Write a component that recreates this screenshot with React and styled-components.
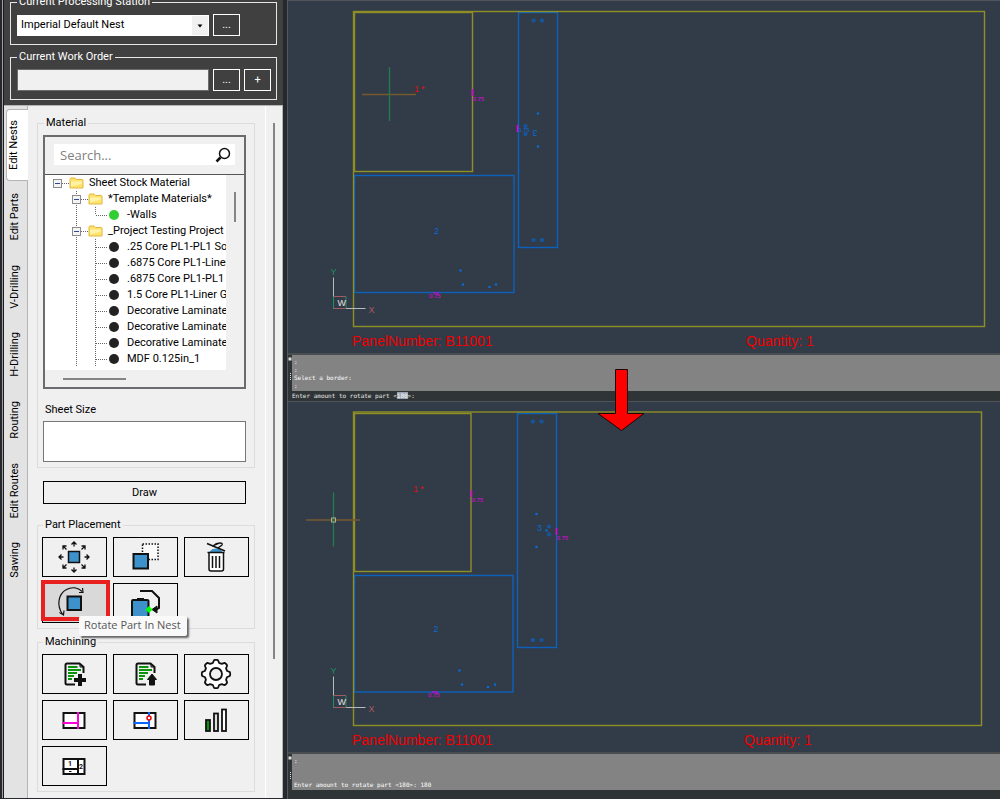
import React, { useState } from 'react';
import styled, { createGlobalStyle } from 'styled-components';

const GlobalStyle = createGlobalStyle`
  * {
    box-sizing: border-box;
  }
  body {
    margin: 0;
    background-color: #2f3437;
    color: #000;
    font-family: Roboto, 'Liberation Sans', Arial, sans-serif;
    font-size: 11px;
    line-height: 14px;
  }
  button, input, select, textarea {
    font: inherit;
    color: inherit;
    border-radius: 0;
  }
  svg {
    display: block;
  }
`;

const Wrapper = styled.div`
  display: flex;
  min-height: 100vh;
`;

/* ---------- palette ---------- */

const Palette = styled.aside`
  display: flex;
  flex: none;
  width: 287px;
  padding: 0 4px 2px 2px;
  background-color: #25292d;
`;

const PaletteInner = styled.div`
  display: flex;
  flex-direction: column;
  flex: 1;
  min-width: 0;
  padding-left: 1px;
  border-left: 1px solid #a0a0a0;
  background-color: #1a1a1a;
  overflow: hidden;
`;

const Header = styled.header`
  display: flex;
  flex-direction: column;
  gap: 5px;
  margin-top: -5px;
  padding: 0 6px 5px;
  background-color: #404040;
`;

const Group = styled.fieldset`
  min-width: 0;
  margin: 0;
  padding: ${(props) => props.$padding};
  border: 1px solid ${(props) => (props.$dark ? '#e6e6e6' : '#dcdcdc')};
  color: ${(props) => (props.$dark ? '#fff' : '#000')};
  legend {
    height: 14px;
    margin-left: ${(props) => (props.$dark ? '0' : '1px')};
    padding: 0 2px;
  }
`;

const StationRow = styled.div`
  display: grid;
  grid-template-columns: 1fr 27px 27px;
  gap: 4px;
  align-items: center;
`;

const SelectBox = styled.div`
  position: relative;
  height: 21px;
  select {
    width: 100%;
    height: 21px;
    padding: 0 20px 0 4px;
    border: none;
    appearance: none;
    background-color: #fff;
    color: #000;
  }
  svg {
    position: absolute;
    top: 1px;
    right: 1px;
    pointer-events: none;
  }
`;

const OrderInput = styled.input`
  width: 100%;
  height: 22px;
  border: 1px solid #6b6b6b;
  background-color: #f0f0f0;
  color: #000;
`;

const DarkButton = styled.button`
  height: 22px;
  padding: 0;
  border: 1px solid #fff;
  background-color: #404040;
  color: #fff;
`;

const Body = styled.div`
  display: flex;
  flex: 1;
  border-top: 1px solid #b4b4b4;
  border-right: 1px solid #b4b4b4;
  background-color: #f0f0f0;
`;

const Tabs = styled.nav`
  display: flex;
  flex-direction: column;
  align-items: flex-end;
  width: 24px;
  padding-top: 3px;
  border-right: 1px solid #b4b4b4;
  background-color: #e3e3e3;
`;

const Tab = styled.button`
  width: ${(props) => (props.$active ? '22px' : '23px')};
  margin-right: ${(props) => (props.$active ? '-1px' : '0')};
  padding: ${(props) => (props.$active ? '10px 7px 10px 0' : '12px 5px 12px 4px')};
  border: 1px solid ${(props) => (props.$active ? '#b4b4b4' : 'transparent')};
  border-width: ${(props) => (props.$active ? '1px 0 1px 1px' : '0')};
  border-radius: 4px 0 0 4px;
  background-color: ${(props) => (props.$active ? '#fff' : 'transparent')};
  span {
    display: block;
    writing-mode: vertical-rl;
    transform: rotate(180deg);
    white-space: nowrap;
  }
`;

const Tools = styled.main`
  flex: 1;
  min-width: 0;
  padding: 10px 10px 6px 9px;
`;

const Gutter = styled.div`
  display: flex;
  justify-content: center;
  width: 17px;
  padding: 17px 1px 0 0;
  border-left: 1px solid #fff;
`;

const Thumb = styled.div`
  width: ${(props) => (props.$horizontal ? '63px' : '2px')};
  height: ${(props) => (props.$horizontal ? '2px' : props.$length)};
  background-color: #858585;
`;

const TreeBox = styled.div`
  border: 2px solid #6a6c70;
  background-color: #f0f0f0;
`;

const SearchArea = styled.div`
  padding: 7px 9px 9px;
  border-bottom: 1px solid #555;
`;

const SearchBar = styled.label`
  display: flex;
  align-items: center;
  height: 21px;
  padding: 0 4px 0 6px;
  background-color: #fff;
  input {
    flex: 1;
    min-width: 0;
    padding: 0;
    border: none;
    outline: none;
    font: 13px/18px 'Open Sans', sans-serif;
    &::placeholder {
      color: #808080;
      opacity: 1;
    }
  }
`;

const TreeScroll = styled.div`
  display: grid;
  grid-template-columns: 1fr 18px;
`;

const Tree = styled.ul`
  height: 195px;
  margin: 0;
  padding: 0;
  list-style: none;
  background-color: #fff;
  overflow: hidden;
`;

const TreeRow = styled.li`
  display: flex;
  align-items: center;
  height: 16px;
  svg {
    flex: none;
  }
  span {
    margin-left: 5px;
    white-space: nowrap;
  }
`;

const VerticalTrack = styled.div`
  display: flex;
  justify-content: center;
  padding-top: 17px;
`;

const HorizontalTrack = styled.div`
  height: 17px;
  padding: 8px 0 0 18px;
`;

const FieldLabel = styled.label`
  display: block;
  margin: 14px 0 4px 2px;
`;

const SheetSize = styled.textarea`
  display: block;
  width: 100%;
  height: 41px;
  border: 1px solid #777;
  background-color: #fff;
  resize: none;
`;

const DrawButton = styled.button`
  display: block;
  width: calc(100% - 15px);
  height: 23px;
  margin: 13px 0 14px 6px;
  padding: 0;
  border: 1px solid #000;
  background-color: #f0f0f0;
`;

const ButtonGrid = styled.div`
  display: grid;
  grid-template-columns: repeat(3, 1fr);
  gap: 6px;
`;

const ToolSlot = styled.div`
  position: relative;
`;

const ToolButton = styled.button`
  display: flex;
  justify-content: center;
  align-items: center;
  width: 100%;
  height: 40px;
  padding: 0;
  border: 1px solid #000;
  background-color: ${(props) => (props.$hovered ? '#d9d9d9' : '#f0f0f0')};
`;

const Highlight = styled.div`
  position: absolute;
  inset: -3px -3px 2px -1px;
  border: 4px solid #e8201e;
  pointer-events: none;
`;

const Tooltip = styled.div`
  position: absolute;
  top: 33px;
  left: 37px;
  z-index: 2;
  padding: 1px 6px 3px 5px;
  border-radius: 2px;
  background-color: #f9f9f9;
  box-shadow: 2px 2px 2px #666;
  color: #575757;
  font: 11px/16px 'Open Sans', sans-serif;
  white-space: nowrap;
`;

const Spacer = styled.div`
  height: 6px;
`;

/* ---------- drawing area ---------- */

const Workspace = styled.section`
  position: relative;
  flex: 1;
  min-width: 0;
  border-left: 1px solid #55585c;
`;

const Viewport = styled.div`
  border-top: 1px solid #50545a;
  border-bottom: 2px solid #4a4d50;
  background-color: #323b48;
  svg {
    width: 100%;
    height: auto;
  }
`;

const Console = styled.div`
  display: flex;
  background-color: #2f3437;
  color: #fff;
  font: 6px/8px 'DejaVu Sans Mono', monospace;
`;

const ConsoleHandle = styled.div`
  display: flex;
  flex-direction: column;
  justify-content: space-between;
  width: 4px;
  padding: 2px 0 10px;
`;

const ConsoleLog = styled.pre`
  flex: 1;
  height: 36px;
  margin: 0;
  padding: 3px 2px 1px;
  background-color: #838383;
  font: inherit;
`;

const Prompt = styled.div`
  height: 10px;
  padding: 1px 4px;
  background-color: #2f3437;
  color: #e8e8e8;
  font: 6px/8px 'DejaVu Sans Mono', monospace;
  mark {
    background-color: #9aa5b1;
    color: #fff;
  }
`;

const Arrow = styled.svg`
  position: absolute;
  top: 368px;
  left: calc(50% - 48px);
`;

const blue = '#3d92cc';

const tabs = [
  'Edit Nests',
  'Edit Parts',
  'V-Drilling',
  'H-Drilling',
  'Routing',
  'Edit Routes',
  'Sawing',
];

const materials = [
  { level: 0, name: 'Sheet Stock Material' },
  { level: 1, name: '*Template Materials*' },
  { level: 2, name: '-Walls', color: '#32cd32', last: true },
  { level: 1, name: '_Project Testing Project' },
  { level: 2, name: '.25 Core PL1-PL1 So' },
  { level: 2, name: '.6875 Core PL1-Liner' },
  { level: 2, name: '.6875 Core PL1-PL1 G' },
  { level: 2, name: '1.5 Core PL1-Liner G' },
  { level: 2, name: 'Decorative Laminate' },
  { level: 2, name: 'Decorative Laminate' },
  { level: 2, name: 'Decorative Laminate' },
  { level: 2, name: 'MDF 0.125in_1' },
];

function Expander({ x }) {
  return (
    <g>
      <rect x={x + 0.5} y="4.5" width="8" height="8" fill="#f4f4f4" stroke="#8c8c8c" />
      <path d={`M${x + 2} 8.5h5`} stroke="#2c4a9a" />
    </g>
  );
}

function TreeLines({ level, last }) {
  const dots = { stroke: '#666', strokeDasharray: '1 1', fill: 'none' };
  if (level === 0) {
    return (
      <svg width="24" height="16">
        <path d="M17 8.5h7" {...dots} />
        <Expander x={8} />
      </svg>
    );
  }
  if (level === 1) {
    return (
      <svg width="43" height="16">
        <path d="M31.5 0v16M36 8.5h7" {...dots} />
        <Expander x={27} />
      </svg>
    );
  }
  return (
    <svg width="62" height="16">
      <path d={`M31.5 0v16M50.5 0v${last ? 8 : 16}M51 8.5h11`} {...dots} />
    </svg>
  );
}

function TreeIcon({ level, color }) {
  if (level < 2) {
    return (
      <svg width="15" height="16">
        <path
          d="M1 4.5q0-1.5 1-1.5h4l1.5 1.5h5.5q1 0 1 1v7.5h-13z"
          fill="#ffe36b"
          stroke="#e3b640"
        />
        <path d="M2 6.500h11v2l-11 3z" fill="#fff3a8" />
      </svg>
    );
  }
  return (
    <svg width="15" height="16">
      <circle cx="7" cy="8" r="5" fill={color || '#222'} />
    </svg>
  );
}

function ToolIcon({ children }) {
  return (
    <svg width="63" height="38" viewBox="0 0 63 38" fill="none" stroke="#111">
      {children}
    </svg>
  );
}

function SpreadIcon() {
  return (
    <ToolIcon>
      {[0, 90, 180, 270].map((deg) => (
        <g key={deg} transform={`rotate(${deg} 31 19)`} strokeWidth="1.3">
          <path d="M31 8.5V4M28.5 6.5L31 4L33.5 6.5" />
          <path d="M23.5 11.5L20 8M20 11.5V8H23.5" />
        </g>
      ))}
      <rect x="25.5" y="13.5" width="11" height="11" fill={blue} strokeWidth="1.5" />
    </ToolIcon>
  );
}

function MoveIcon() {
  return (
    <ToolIcon>
      <rect x="28.5" y="6" width="15.5" height="15.5" fill="#fafafa" strokeWidth="1.5" strokeDasharray="1.5 1.5" />
      <rect x="19.5" y="16" width="14.5" height="14.5" fill={blue} strokeWidth="2" />
    </ToolIcon>
  );
}

function TrashIcon() {
  return (
    <ToolIcon>
      <path d="M25 14q1-3 6-3t6 3z" fill={blue} stroke={blue} />
      <path d="M22.5 14.5H39.5M24 15V31q0 2 2 2H36.5q2 0 2-2V15" fill="#fff" strokeWidth="1.5" />
      <path d="M27.5 18V30M31 18V30M34.5 18V30" strokeWidth="1.5" />
      <path d="M22 5.5L40 13" strokeWidth="1.5" />
      <path d="M27.500 8L35 5M33 10L37 7Q38 5 35 5Q31 5 28 8" strokeWidth="1.3" />
    </ToolIcon>
  );
}

function RotateIcon() {
  return (
    <ToolIcon>
      <path d="M19.5 30C13.5 22 15 10 23.5 5.5C29 2.5 35 3.5 39 7.5" strokeWidth="1.2" />
      <path d="M16.5 28.5L20.5 31L21 26.5M36 8.5L40 8.5L39.5 4" strokeWidth="1.2" />
      <rect x="24.5" y="12.5" width="13.5" height="13.5" fill={blue} strokeWidth="2" />
    </ToolIcon>
  );
}

function MoveRotateIcon() {
  return (
    <ToolIcon>
      <path d="M18 38V17Q18 16 19 16H33Q34.5 16 34.5 17V38" fill={blue} strokeWidth="2" />
      <path d="M23 15H30" strokeWidth="2" />
      <path d="M26 7H38L45 14V24L42 25.5" strokeWidth="2" />
      <path d="M38 25.5L43 22V29Z" fill="#111" />
      <path d="M35 22L38.5 25.5L35 29L31.5 25.5Z" fill="#0f0" stroke="none" />
    </ToolIcon>
  );
}

function ProgramIcon({ type }) {
  return (
    <ToolIcon>
      <path d="M40.5 18V12L36.5 8.5H24Q22.5 8.5 22.5 10V28Q22.5 29.5 24 29.5H32" strokeWidth="2" />
      <path d="M37 9V12H41" />
      <path
        d="M25 12H34.5M25 15H38M25 18H34M25 21H31M25 24H29"
        stroke="#0b930b"
        strokeWidth="2"
      />
      {type === 'add' && <path d="M37 19V31M31 25H43" strokeWidth="4" />}
      {type === 'up' && (
        <path d="M38 19L42.5 24.5H40.5V30H35.5V24.5H33.5Z" fill="#111" />
      )}
    </ToolIcon>
  );
}

function GearIcon() {
  const points = Array.from({ length: 96 }, (_, i) => {
    const a = (i / 96) * Math.PI * 2;
    const r = 12.8 + 1.4 * Math.tanh(2.5 * Math.cos(8 * a));
    return `${31 + r * Math.cos(a)},${19 + r * Math.sin(a)}`;
  });
  return (
    <ToolIcon>
      <polygon points={points.join(' ')} fill="#fff" strokeWidth="1.8" strokeLinejoin="round" />
      <circle cx="31" cy="19" r="6" fill="#f0f0f0" strokeWidth="1.8" />
    </ToolIcon>
  );
}

function CutIcon({ color, point }) {
  return (
    <ToolIcon>
      <rect x="20.500" y="12" width="21" height="15" fill="#fff" strokeWidth="2" />
      <path d="M35 11V28M19.500 22H35" stroke={color} strokeWidth="2" />
      {point && <circle cx="35" cy="17" r="2" fill="#fff" stroke="#f00000" strokeWidth="1.5" />}
    </ToolIcon>
  );
}

function BarsIcon() {
  return (
    <ToolIcon>
      <g strokeWidth="1.8">
        <rect x="21" y="19" width="4" height="11" fill="#0b930b" />
        <rect x="29" y="12.5" width="4" height="17.5" fill="#ddd" />
        <rect x="37" y="8.5" width="4" height="21.5" fill="#fff" />
      </g>
    </ToolIcon>
  );
}

function NumberIcon() {
  return (
    <ToolIcon>
      <rect x="20.500" y="12" width="21" height="15" fill="#fff" strokeWidth="2" />
      <path d="M35 11V28M19.500 22H35" strokeWidth="2" />
      <path d="M26 24.5H28.5" />
      <g fill="#111" stroke="none" fontSize="7" fontWeight="700">
        <text x="25" y="19">1</text>
        <text x="36" y="22">2</text>
      </g>
    </ToolIcon>
  );
}

const placementTools = [
  { label: 'Spread Parts', icon: <SpreadIcon /> },
  { label: 'Move Part', icon: <MoveIcon /> },
  { label: 'Delete Part', icon: <TrashIcon /> },
  { label: 'Rotate Part In Nest', icon: <RotateIcon />, hovered: true },
  { label: 'Move And Rotate Part', icon: <MoveRotateIcon /> },
];

const machiningTools = [
  { label: 'Add Program', icon: <ProgramIcon type="add" /> },
  { label: 'Export Program', icon: <ProgramIcon type="up" /> },
  { label: 'Settings', icon: <GearIcon /> },
  { label: 'Cut Lines', icon: <CutIcon color="#ff00dc" /> },
  { label: 'Cut Points', icon: <CutIcon color="#0a64ff" point /> },
  { label: 'Statistics', icon: <BarsIcon /> },
  { label: 'Number Parts', icon: <NumberIcon /> },
];

function ToolGroup({ title, tools }) {
  return (
    <Group $padding="5px 5px 5px 4px">
      <legend>{title}</legend>
      <ButtonGrid>
        {tools.map((tool) => (
          <ToolSlot key={tool.label}>
            <ToolButton type="button" aria-label={tool.label} $hovered={tool.hovered}>
              {tool.icon}
            </ToolButton>
            {tool.hovered && <Highlight />}
            {tool.hovered && <Tooltip role="tooltip">{tool.label}</Tooltip>}
          </ToolSlot>
        ))}
      </ButtonGrid>
    </Group>
  );
}

/* Geometry is [x, y, width, height] for boxes and [x, y] for points. */
const before = {
  height: 352,
  sheet: [65.5, 10.5, 631, 315],
  part1: [66.5, 11.5, 118, 159],
  part2: [66.5, 174.5, 159.5, 117],
  part3: [230.5, 11.5, 39, 235],
  cursor: [101, 93],
  one: [126, 91],
  two: [145.5, 232],
  three: [247, 132],
  flipped: true,
  holes: [[245.5, 19.5], [254, 19.5], [245.5, 239], [254, 239], [237.5, 125], [237.5, 133]],
  dots: [[250, 112.5], [250, 145.5], [172.5, 269.5], [175, 283.5], [201.5, 286], [208, 283.5]],
  banding: [[184.5, 91], [229.5, 127]],
  bottomEdge: [145, 292],
  ucs: [45.5, 307.5],
  titleY: 345,
  quantityX: 459,
};

const after = {
  height: 350,
  sheet: [65.5, 10, 628, 313.5],
  part1: [66.5, 11.5, 116.5, 158],
  part2: [66.5, 173.5, 158.5, 116.5],
  part3: [229.5, 11.5, 39, 234],
  cursor: [45, 117.5],
  pickBox: true,
  one: [125, 90],
  two: [145, 229],
  three: [251.5, 125.5],
  holes: [[245, 19.5], [253.5, 19.5], [245, 238], [253.5, 238], [261, 124.5], [261, 132.5]],
  dots: [[248.5, 112], [248.5, 145], [258.5, 128.5], [171.5, 268.5], [174, 282.5], [200, 285], [207, 282.5]],
  banding: [[183.5, 91], [268.5, 129]],
  bottomEdge: [144, 290],
  ucs: [45.5, 305.5],
  titleY: 343,
  quantityX: 457,
};

function Box({ at, color }) {
  const [x, y, width, height] = at;
  return (
    <rect x={x} y={y} width={width} height={height} stroke={color} strokeWidth="1.4" fill="none" />
  );
}

function NestDrawing({ nest }) {
  const [cx, cy] = nest.cursor;
  const [ux, uy] = nest.ucs;
  const [ex, ey] = nest.bottomEdge;
  const [tx, ty] = nest.three;
  return (
    <svg viewBox={`0 0 712 ${nest.height}`} fontFamily="'Liberation Sans', Arial, sans-serif">
      <Box at={nest.part2} color="#0b62bd" />
      <Box at={nest.part3} color="#0b62bd" />
      <Box at={nest.sheet} color="#8f8f26" />
      <Box at={nest.part1} color="#8f8f26" />

      <path d={`M${cx - 27} ${cy + 0.5}h54`} stroke="#75592f" strokeWidth="1.4" />
      <path d={`M${cx + 0.5} ${cy - 27}v54`} stroke="#257a4c" strokeWidth="1.4" />
      {nest.pickBox && (
        <rect x={cx - 1.5} y={cy - 1.5} width="4" height="4" fill="none" stroke="#a9b08c" />
      )}

      {nest.holes.map(([x, y]) => (
        <circle key={`${x}-${y}`} cx={x} cy={y} r="1.5" fill="#1a4d8c" stroke="#0b62bd" />
      ))}
      {nest.dots.map(([x, y]) => (
        <circle key={`${x}-${y}`} cx={x} cy={y} r="1.3" fill="#0b6ad0" />
      ))}

      <g fontSize="9" fill="#0b6ad0" textAnchor="middle">
        <text x={nest.two[0] + 3} y={nest.two[1] + 1}>2</text>
        <text
          x={tx}
          y={ty + 3}
          transform={nest.flipped ? `rotate(180 ${tx} ${ty})` : undefined}
        >
          3
        </text>
      </g>
      {nest.flipped && (
        <text x={tx - 17} y={ty - 1} fontSize="6" fill="#0b6ad0">0.75</text>
      )}
      <text x={nest.one[0]} y={nest.one[1]} fontSize="9" fill="#e01010">1</text>
      <text x={nest.one[0] + 7} y={nest.one[1]} fontSize="9" fill="#e01010">*</text>

      {nest.banding.map(([x, y], i) => (
        <g key={x}>
          <path d={`M${x} ${y - 3}v7`} stroke="#e000e0" strokeWidth="1.5" />
          {!(nest.flipped && i === 1) && (
            <text x={x} y={y + 9} fontSize="6" fill="#e000e0">0.75</text>
          )}
        </g>
      ))}
      <path d={`M${ex} ${ey}h6`} stroke="#e000e0" />
      <text x={ex - 4} y={ey + 5} fontSize="6" fill="#e000e0">0.75</text>

      <path d={`M${ux} ${uy}v-31M${ux} ${uy}h32`} stroke="#b8bcc0" />
      <path d={`M${ux} ${uy - 12}h12.5M${ux} ${uy}h12.5`} stroke="#a05a60" />
      <path d={`M${ux} ${uy}v-12M${ux + 12.5} ${uy}v-12`} stroke="#1f9060" />
      <text x={ux + 4} y={uy - 3} fontSize="9" fill="#e0e0e0">W</text>
      <text x={ux - 3} y={uy - 34} fontSize="9" fill="#1f9060">Y</text>
      <text x={ux + 35} y={uy + 4} fontSize="9" fill="#b05a60">X</text>

      <g fontSize="14" fill="#f00000">
        <text x="64" y={nest.titleY}>PanelNumber: B11001</text>
        <text x={nest.quantityX - 1} y={nest.titleY}>Quantity: 1</text>
      </g>
    </svg>
  );
}

function CommandConsole({ children }) {
  return (
    <Console>
      <ConsoleHandle>
        <svg width="4" height="4">
          <rect x="0.5" y="0.5" width="3" height="3" fill="#ddd" />
        </svg>
        <svg width="4" height="8">
          <path d="M2.5 0v8" stroke="#ddd" strokeDasharray="1 1" />
        </svg>
      </ConsoleHandle>
      <ConsoleLog>{children}</ConsoleLog>
    </Console>
  );
}

function App() {
  const [activeTab, setActiveTab] = useState('Edit Nests');
  const [search, setSearch] = useState('');

  return (
    <Wrapper>
      <GlobalStyle />
      <Palette>
        <PaletteInner>
          <Header>
            <Group $dark $padding="5px 5px 8px 6px">
              <legend>Current Processing Station</legend>
              <StationRow>
                <SelectBox>
                  <select aria-label="Current Processing Station">
                    <option>Imperial Default Nest</option>
                  </select>
                  <svg width="16" height="19">
                    <rect width="16" height="19" fill="#f0f0f0" />
                    <path d="M5.500 8.500h5l-2.500 3z" fill="#000" />
                  </svg>
                </SelectBox>
                <DarkButton type="button">...</DarkButton>
              </StationRow>
            </Group>
            <Group $dark $padding="5px 5px 8px 6px">
              <legend>Current Work Order</legend>
              <StationRow>
                <OrderInput type="text" aria-label="Current Work Order" />
                <DarkButton type="button">...</DarkButton>
                <DarkButton type="button">+</DarkButton>
              </StationRow>
            </Group>
          </Header>

          <Body>
            <Tabs>
              {tabs.map((tab) => (
                <Tab
                  key={tab}
                  type="button"
                  $active={tab === activeTab}
                  onClick={() => setActiveTab(tab)}
                >
                  <span>{tab}</span>
                </Tab>
              ))}
            </Tabs>
            <Tools>
              <Group $padding="5px 8px 5px 5px">
                <legend>Material</legend>
                <TreeBox>
                  <SearchArea>
                    <SearchBar>
                      <input
                        type="text"
                        aria-label="Search materials"
                        placeholder="Search..."
                        value={search}
                        onChange={(e) => setSearch(e.target.value)}
                      />
                      <svg width="16" height="16" fill="none" stroke="#111">
                        <circle cx="9.5" cy="6.5" r="5" strokeWidth="1.5" />
                        <path d="M5.5 10.5L1.5 14.5" strokeWidth="2.5" />
                      </svg>
                    </SearchBar>
                  </SearchArea>
                  <TreeScroll>
                    <Tree>
                      {materials.map((item, index) => (
                        <TreeRow key={index}>
                          <TreeLines level={item.level} last={item.last} />
                          <TreeIcon level={item.level} color={item.color} />
                          <span>{item.name}</span>
                        </TreeRow>
                      ))}
                    </Tree>
                    <VerticalTrack>
                      <Thumb $length="30px" />
                    </VerticalTrack>
                  </TreeScroll>
                  <HorizontalTrack>
                    <Thumb $horizontal />
                  </HorizontalTrack>
                </TreeBox>
                <FieldLabel htmlFor="sheet-size">Sheet Size</FieldLabel>
                <SheetSize id="sheet-size" />
              </Group>

              <DrawButton type="button">Draw</DrawButton>

              <ToolGroup title="Part Placement" tools={placementTools} />
              <Spacer />
              <ToolGroup title="Machining" tools={machiningTools} />
            </Tools>
            <Gutter>
              <Thumb $length="536px" />
            </Gutter>
          </Body>
        </PaletteInner>
      </Palette>

      <Workspace>
        <Viewport>
          <NestDrawing nest={before} />
        </Viewport>
        <CommandConsole>{':\n:\nSelect a border:\n:'}</CommandConsole>
        <Prompt>
          Enter amount to rotate part &lt;<mark>180</mark>&gt;:
        </Prompt>
        <Viewport>
          <NestDrawing nest={after} />
        </Viewport>
        <CommandConsole>
          {':\n\n\nEnter amount to rotate part <180>: 180'}
        </CommandConsole>
        <Arrow width="50" height="64" aria-hidden="true">
          <path
            d="M19.5 1.5H31.5V45.5H48L25.5 62.5L2 45.5H19.5Z"
            fill="#f00"
            stroke="#200"
          />
        </Arrow>
      </Workspace>
    </Wrapper>
  );
}

export default App;
